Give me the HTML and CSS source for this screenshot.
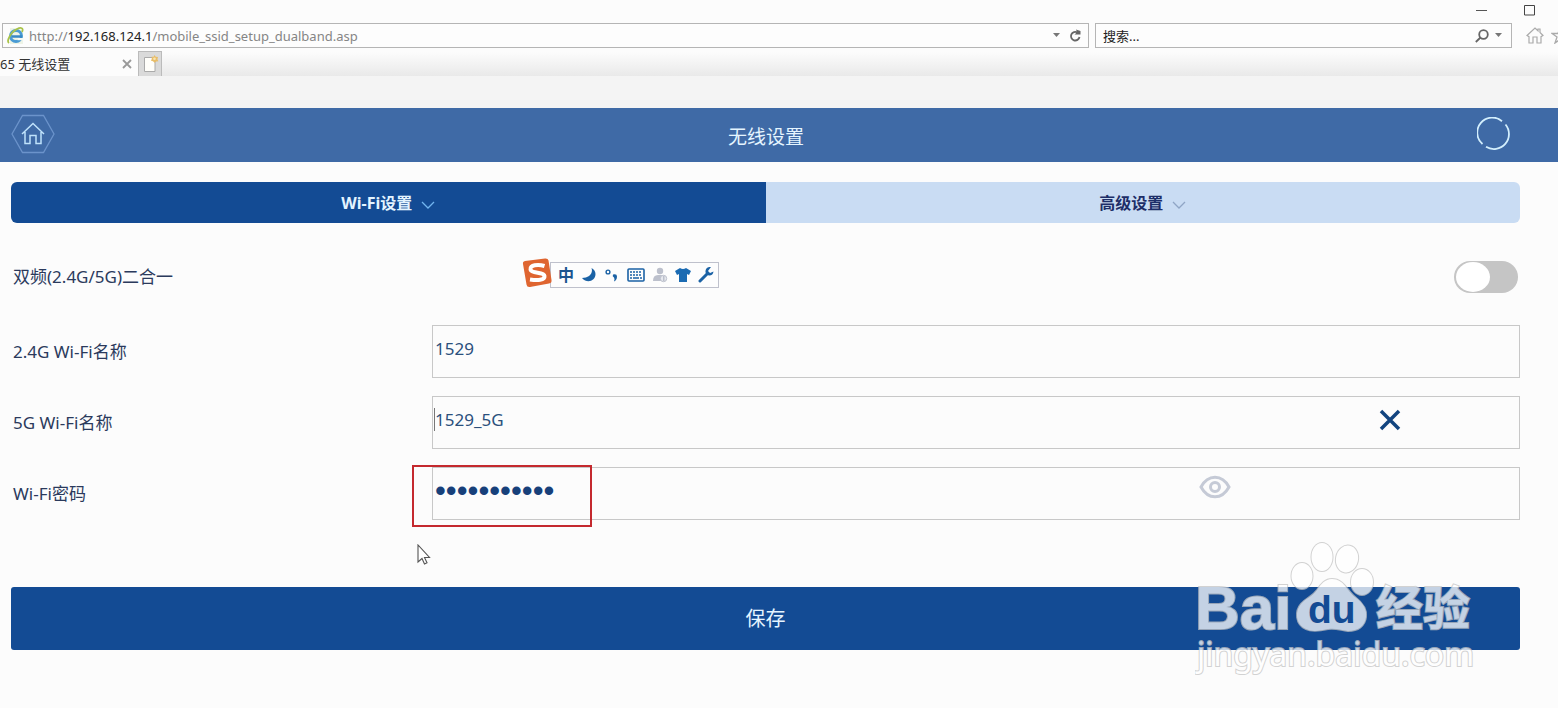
FILE: index.html
```html
<!DOCTYPE html>
<html lang="zh-CN">
<head>
<meta charset="utf-8">
<title>无线设置</title>
<link rel="stylesheet" href="styles.css">
</head>
<body>
<div class="browser">
  <div class="titlebar">
    <button class="plain" aria-label="最小化"><svg width="12" height="12" viewBox="0 0 12 12"><path d="M0 6.500h11" stroke="#555" fill="none"/></svg></button>
    <button class="plain" aria-label="最大化"><svg width="12" height="12" viewBox="0 0 12 12"><path d="M.5 1.500h10v9.500h-10z" stroke="#444" fill="none"/></svg></button>
  </div>
  <div class="toolbar">
    <div class="address">
      <svg width="18" height="18" viewBox="0 0 18 18" fill="none"><path d="M3 1h9l4 4v12H3z" fill="#eef4e6"/><circle cx="9" cy="9" r="5.500" stroke="#4a9bd4" stroke-width="3"/><path d="M5 9.500h10" stroke="#3888c5" stroke-width="2.500"/><path d="M10.500 11h6v2.200h-6z" fill="#f5faf5"/><path d="M2 16c-3-2 2-11 8-14 4-2 7-1 5 3" stroke="#a9c348" stroke-width="1.800"/></svg>
      <div class="url">http://<span class="host">192.168.124.1</span>/mobile_ssid_setup_dualband.asp</div>
      <button class="plain" aria-label="地址列表"><svg width="8" height="5" viewBox="0 0 8 5"><path d="M0 0h7L3.500 4z" fill="#777"/></svg></button>
      <button class="plain" aria-label="刷新"><svg width="13" height="14" viewBox="0 0 13 14"><path d="M8.500 3.500A4.300 4.300 0 1 0 10.500 8" stroke="#666" stroke-width="1.800" fill="none"/><path d="M7 .5l1 2.700-2.500 2.300h6V2z" fill="#666"/></svg></button>
    </div>
    <div class="search">
      <input class="search-input" aria-label="搜索" placeholder="搜索...">
      <button class="plain" aria-label="搜索"><svg width="14" height="14" viewBox="0 0 14 14" fill="none" stroke="#666" stroke-width="1.800"><circle cx="8.500" cy="5.500" r="4.300"/><path d="M5.500 8.500L.8 13"/></svg></button>
      <button class="plain" aria-label="搜索选项"><svg width="8" height="5" viewBox="0 0 8 5"><path d="M0 0h7L3.500 4z" fill="#777"/></svg></button>
    </div>
    <div class="tools">
      <button class="plain" aria-label="主页"><svg width="18" height="17" viewBox="0 0 18 17" fill="none" stroke="#aaa" stroke-width="1.200"><path d="M1 8.500L9 1l3 2.800V2h2v3.500L17 8.500l-2 1.200V16h-4v-6H7v6H3V9.700z"/></svg></button>
      <button class="plain" aria-label="收藏"><svg width="18" height="17" viewBox="0 0 18 17" fill="none" stroke="#aaa" stroke-width="1.300"><path d="M9 1l2 5.500h6l-5 3.500 2 6-5-3.500L4 16l2-6-5-3.500h6z"/></svg></button>
    </div>
  </div>
  <div class="tabstrip">
    <div class="page-tab"><span>65 无线设置</span><button class="plain" aria-label="关闭标签页"><svg width="10" height="10" viewBox="0 0 10 10"><path d="M1 1l8 8M9 1L1 9" stroke="#999" stroke-width="1.800"/></svg></button></div>
    <button class="new-tab" aria-label="新标签页"><svg width="17" height="18" viewBox="0 0 17 18"><path d="M2.500 2.500h10.500v14H2.500z" fill="#fffefa" stroke="#aaa"/><path d="M12.500 0l1.200 1.800 2.300.2-.6 2.200 1 2-2.200.3-1.700 1.300-1.500-1.500-2-.6.8-2-.2-2 2.100.1z" fill="#e8bd68"/><circle cx="12.500" cy="3.700" r="1.300" fill="#f9e5b5"/></svg></button>
  </div>
</div>
<header class="header">
  <button class="plain" aria-label="首页"><svg width="44" height="40" viewBox="0 0 44 40" fill="none"><path d="M11.500 1.500h21L43 20 32.500 38.500h-21L1 20z" stroke="#6b93cb" stroke-width="1.300"/><path d="M11 20L22 9.500 33 20M14 18v11.500h5v-8h6v8h5V18" stroke="#bfe2fb" stroke-width="1.500"/></svg></button>
  <h1 class="title">无线设置</h1>
  <svg class="spinner" width="34" height="34" viewBox="0 0 34 34" fill="none" stroke="#d3effd" stroke-width="1.800"><path d="M5.500 27A15 15 0 0 1 25 4.200M28.500 7.500A15 15 0 0 1 9 29.800"/></svg>
</header>
<main class="main">
  <nav class="tabs">
    <button class="tab active">Wi-Fi设置<svg width="14" height="8" viewBox="0 0 14 8" fill="none" stroke="#72b5ef" stroke-width="1.300"><path d="M1 1l6 6 6-6"/></svg></button>
    <button class="tab">高级设置<svg width="14" height="8" viewBox="0 0 14 8" fill="none" stroke="#8fa5c5" stroke-width="1.300"><path d="M1 1l6 6 6-6"/></svg></button>
  </nav>
  <form class="form">
    <div class="row switch-row">
      <label for="dual">双频(2.4G/5G)二合一</label>
      <input class="switch" type="checkbox" id="dual">
    </div>
    <div class="row">
      <label for="ssid24">2.4G Wi-Fi名称</label>
      <div class="field"><input class="field-input" id="ssid24" value="1529"></div>
    </div>
    <div class="row">
      <label for="ssid5">5G Wi-Fi名称</label>
      <div class="field"><span class="caret"></span><input class="field-input" id="ssid5" value="1529_5G"><button type="button" class="plain clear" aria-label="清除"><svg width="22" height="22" viewBox="0 0 22 22"><path d="M2 2l18 18M20 2L2 20" stroke="#12447f" stroke-width="3.500"/></svg></button></div>
    </div>
    <div class="row">
      <label for="pwd">Wi-Fi密码</label>
      <div class="field"><input class="field-input password" id="pwd" type="password" value="12345678901"><button type="button" class="plain reveal" aria-label="显示密码"><svg width="32" height="24" viewBox="0 0 32 24" fill="none" stroke="#c5cad6" stroke-width="3"><path d="M2 12C9-1 23-1 30 12 23 25 9 25 2 12z"/><circle cx="16" cy="12" r="4.500"/></svg></button></div>
    </div>
    <button type="button" class="save">保存</button>
  </form>
</main>

<div class="ime">
  <svg class="ime-logo" width="32" height="32" viewBox="0 0 32 32"><path d="M2 7Q1.500 4.500 4 4L24 1.500q3-.3 3.500 2L30.500 23q.5 3-2.500 3.500L9 30q-3 .5-3.500-2.500z" fill="#df6530"/><path d="M23.500 9C17 7 8.500 8 9.500 12.500S23 14.500 23.500 19 16 23.500 9 22.500" fill="none" stroke="#fff" stroke-width="4"/></svg>
  <div class="ime-bar">
    <span class="ime-mode">中</span>
    <svg width="16" height="16" viewBox="0 0 16 16"><path d="M10.500 1c2 6-3 10-9.500 10 5 6 13.500 3 13.500-4 0-3-2-5-4-6z" fill="#1b62a5"/></svg>
    <svg width="16" height="16" viewBox="0 0 16 16"><circle cx="4" cy="5" r="1.900" fill="none" stroke="#1b62a5" stroke-width="1.400"/><path d="M9 7.500q4-1 4 2 0 3.500-3 5 1-2.500 0-4-2-1-1-3z" fill="#1b62a5"/></svg>
    <svg width="18" height="14" viewBox="0 0 18 14" fill="none" stroke="#1b62a5"><rect x="1" y="1" width="16" height="12" rx="1" stroke-width="1.600"/><path d="M3 4h12M3 7h12" stroke-width="1.500" stroke-dasharray="2 1"/><path d="M3 10h2m1 0h6m1 0h2" stroke-width="1.300"/></svg>
    <svg width="16" height="16" viewBox="0 0 16 16" fill="#bcc0cc"><circle cx="8" cy="4" r="3.200"/><path d="M1 14q0-6 5-6h4l1 6z"/><circle cx="11.500" cy="11.500" r="3.200" fill="#e7e9ef" stroke="#bcc0cc"/><path d="M11 9h1.500v5H11z"/></svg>
    <svg width="16" height="16" viewBox="0 0 16 16"><path d="M5 1q3 2 6 0l5 3-2 4-2-1v8H4V7L2 8 0 4z" fill="#1b6bb3"/></svg>
    <svg width="16" height="16" viewBox="0 0 16 16"><path d="M2 14l7-7" stroke="#1b62a5" stroke-width="3" stroke-linecap="round"/><path d="M13 0q-5-.5-5.500 4-.3 4 3.500 4.500 4 .2 4.500-4L12 6 10 4z" fill="#1b62a5"/></svg>
  </div>
</div>
<div class="highlight"></div>
<svg class="pointer" width="14" height="22" viewBox="0 0 14 22"><path d="M1 1v17l4-3.500 2.500 5.500 2.500-1.200L7.500 13.500H12.500z" fill="#fff" stroke="#555" stroke-width="1.100"/></svg>
<svg class="watermark" width="300" height="144" viewBox="0 0 300 144">
  <g class="wm-fill">
    <text class="wm-brand" x="0" y="93">Bai</text>
    <ellipse cx="107" cy="40" rx="10.500" ry="13"/>
    <ellipse cx="127" cy="21" rx="10.500" ry="14"/>
    <ellipse cx="152" cy="23" rx="11" ry="13.500" transform="rotate(12 152 23)"/>
    <ellipse cx="167" cy="46" rx="11" ry="13"/>
    <path d="M137 43c12 0 15 12 23 18 9 7 12 13 11 20-1 9-8 14-18 14-8-1-12-3-20-2-9 2-16 3-22 0-11-5-11-18-5-25 5-6 11-7 16-14 4-6 8-11 15-11z"/>
    <text class="wm-cjk" x="181" y="89">经验</text>
    <text class="wm-site" x="2" y="130">jingyan.baidu.com</text>
  </g>
  <text class="wm-du" x="113" y="87">du</text>
</svg>
</body>
</html>
```
FILE: styles.css
```css
* { box-sizing: border-box; }
body {
  position: relative;
  min-height: 100vh;
  margin: 0;
  overflow-x: hidden;
  background: #fcfcfc;
  color: #2b3a5c;
  font: 17px/24px "Noto Sans", "Noto Sans CJK SC", sans-serif;
}
svg { display: block; flex: none; }
button, input { font: inherit; color: inherit; }
.plain { padding: 0; border: 0; background: none; flex: none; }

.browser { font-size: 13px; line-height: 20px; color: #333; overflow: hidden; }
.titlebar { display: flex; justify-content: flex-end; gap: 36px; height: 23px; padding: 4px 22px 0 0; }
.titlebar .plain { height: 12px; }
.toolbar { display: grid; grid-template-columns: 1087fr 417fr 40px; gap: 6px; padding-left: 2px; }
.address, .search { display: flex; align-items: center; height: 25px; border: 1px solid #b5b5b5; background: #fdfdfd; }
.address { gap: 8px; padding: 0 6px 0 4px; }
.url { flex: 1; color: #858585; margin-left: -4px; }
.host { color: #222; }
.search { gap: 6px; padding: 0 8px 0 7px; }
.search-input { flex: 1; min-width: 0; padding: 0; border: 0; outline: 0; background: none; }
.search-input::placeholder { color: #222; opacity: 1; }
.tools { display: flex; align-items: center; gap: 7px; padding-left: 8px; }
.tabstrip { display: flex; height: 28px; padding-top: 3px; background: linear-gradient(#fcfcfc 15%, #e9e9e9); }
.page-tab { display: flex; align-items: center; justify-content: space-between; width: 138px; padding-right: 6px; background: #fcfcfc; }
.new-tab { width: 24px; padding: 0 0 0 3px; border: 1px solid #bbb; border-bottom: 0; background: #dadada; }

.header {
  display: flex; align-items: center; justify-content: space-between;
  height: 54px; margin-top: 32px; padding: 0 47px 2px 11px;
  background: #3f6aa6; color: #e5f5ff;
  box-shadow: 0 -32px #f4f4f4;
}
.title { margin: 0; padding-top: 6px; font-size: 19px; line-height: 28px; font-weight: 400; }

.main { padding: 20px 38px 57px 11px; }
.tabs { display: grid; grid-template-columns: 1fr 1fr; height: 41px; border-radius: 6px; overflow: hidden; }
.tab {
  display: flex; align-items: center; justify-content: center; gap: 9px;
  padding: 0; border: 0; background: #c9dcf3; color: #1d2e68;
  font-size: 16px; font-weight: 700;
}
.tab svg { margin-top: 4px; }
.tab.active { background: #134b94; color: #e3f4ff; }
.form { display: grid; gap: 18px; padding-top: 27px; }
.row { display: grid; grid-template-columns: 421px 1fr; align-items: center; }
.row label { padding-left: 2px; }
.switch-row { height: 57px; padding-bottom: 4px; }
.switch {
  appearance: none; justify-self: end; width: 64px; height: 32px; margin: 0 2px 0 0;
  padding: 1px 2px; border-radius: 16px; background: #c5c5c5;
}
.switch::before { content: ""; display: block; width: 34px; height: 30px; border-radius: 50%; background: #fff; }
.field { position: relative; display: flex; align-items: center; height: 53px; padding-bottom: 6px; border: 1px solid #c8c8c8; }
.field-input { flex: 1; min-width: 0; height: 40px; padding: 0 2px; border: 0; outline: 0; background: none; color: #2b507c; }
.password { color: #17407a; font-family: "Liberation Sans", sans-serif; font-size: 31px; }
.clear { margin-right: 118px; }
.reveal { margin: 0 288px 8px 0; }
.caret { position: absolute; left: 1px; top: 11px; width: 1px; height: 23px; background: #777; }
.save { height: 63px; margin-top: 49px; border: 0; border-radius: 3px; background: #134b94; color: #e5f4ff; font-size: 20px; }

.ime { position: absolute; left: 521px; top: 257px; }
.ime-logo { position: absolute; left: 0; top: 0; }
.ime-bar {
  display: flex; align-items: center; justify-content: space-between;
  width: 169px; height: 26px; margin: 5px 0 0 29px; padding: 0 4px 0 7px;
  border: 1px solid #bfc1cc; background: #fdfdfd;
}
.ime-mode { color: #1b5590; font-size: 16px; font-weight: 700; }
.highlight { position: absolute; left: 412px; top: 465px; width: 180px; height: 62px; border: 2px solid #c4292e; }
.pointer { position: absolute; left: 417px; top: 544px; }
.watermark { position: absolute; right: 63px; top: 536px; pointer-events: none; }
.wm-fill { fill: #fff; stroke: #c4c4c4; stroke-width: 2px; paint-order: stroke; opacity: 0.75; }
.wm-brand { font: 700 62px "Liberation Sans", sans-serif; }
.wm-cjk { font: 700 47px "Noto Sans CJK SC", sans-serif; }
.wm-site { font: 32px "Noto Sans", sans-serif; }
.wm-du { font: 700 39px "Liberation Sans", sans-serif; fill: #134b94; }
```
